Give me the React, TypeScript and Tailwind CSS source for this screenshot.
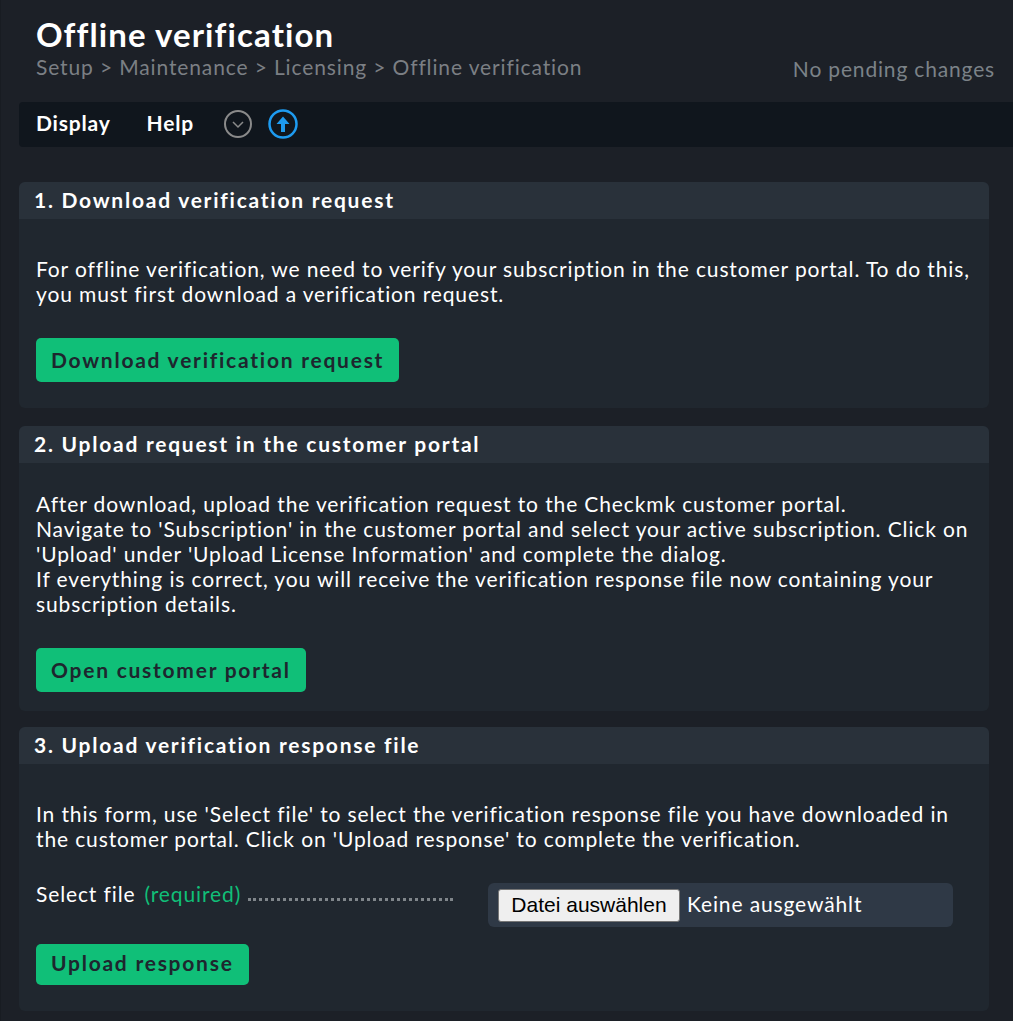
const btn = "inline-block rounded-[5px] bg-[#10bf78] px-[15px] text-[21px] font-bold tracking-[1.75px] text-[#1e262e]";
const bodyText = "px-[17px] text-[21px] leading-[25px] tracking-[0.875px]";

function Section({ title, className, children }: { title: string; className: string; children: React.ReactNode }) {
  return (
    <section className={`mr-6 rounded-[6px] bg-[#20272f] ${className}`}>
      <h2 className="h-[37px] rounded-t-[6px] bg-[#29313a] pl-[15px] text-[21px] leading-[36px] font-bold tracking-[1.75px] text-white">{title}</h2>
      {children}
    </section>
  );
}

export default function App() {
  return (
    <div className="h-[1021px] overflow-hidden border-l border-[#181c22] bg-[#1c2027] pl-[18px] font-['Lato',sans-serif] text-white">
      <header className="flex h-[102px] items-start justify-between">
        <div className="pl-[17px]">
          <h1 className="pt-[12px] text-[33px] leading-[44px] font-bold tracking-[1.1px]">Offline verification</h1>
          <div className="-mt-[3px] text-[21px] leading-[28px] tracking-[0.87px] text-[#7b7f84]">Setup &gt; Maintenance &gt; Licensing &gt; Offline verification</div>
        </div>
        <div className="pt-[55px] pr-[18px] text-[21px] leading-[28px] tracking-[0.83px] text-[#7b8288]">No pending changes</div>
      </header>
      <nav className="flex h-[45px] items-center rounded-l-[4px] bg-[#10161d] pl-[17px] text-[21px] font-bold">
        <span className="pb-[3px] tracking-[0.8px]">Display</span>
        <span className="ml-9 pb-[3px] tracking-[0.8px]">Help</span>
        <svg className="-mt-[1px] ml-[29px]" width="30" height="30" viewBox="0 0 30 30" fill="none">
          <circle cx="15" cy="15" r="13" stroke="#8a8a8a" strokeWidth="2" />
          <path d="M10 13l5 5 5-5" stroke="#8a8a8a" strokeWidth="1.5" />
        </svg>
        <svg className="-mt-[1px] ml-[15px]" width="30" height="30" viewBox="0 0 30 30" fill="none">
          <circle cx="15" cy="15" r="13.500" stroke="#1e9bf0" strokeWidth="2.500" />
          <path d="M15 7.500l6.500 7.500H17v8h-4v-8H8.500z" fill="#1e9bf0" />
        </svg>
      </nav>

      <Section title="1. Download verification request" className="mt-[35px] h-[226px]">
        <p className={`${bodyText} pt-[37px]`}>
          For offline verification, we need to verify your subscription in the customer portal. To do this, you must first download a verification request.
        </p>
        <button className={`${btn} mt-[32px] ml-[17px] h-[44px]`}>Download verification request</button>
      </Section>

      <Section title="2. Upload request in the customer portal" className="mt-[18px] h-[285px]">
        <p className={`${bodyText} pt-[28px]`}>
          After download, upload the verification request to the Checkmk customer portal.<br />
          Navigate to 'Subscription' in the customer portal and select your active subscription. Click on 'Upload' under 'Upload License Information' and complete the dialog.<br />
          If everything is correct, you will receive the verification response file now containing your subscription details.
        </p>
        <button className={`${btn} mt-[32px] ml-[17px] h-[44px]`}>Open customer portal</button>
      </Section>

      <Section title="3. Upload verification response file" className="mt-[16px] h-[284px]">
        <p className={`${bodyText} pt-[37px]`}>
          In this form, use 'Select file' to select the verification response file you have downloaded in the customer portal. Click on 'Upload response' to complete the verification.
        </p>
        <div className="mt-[32px] flex items-start pl-[17px]">
          <div className="-mt-[2px] flex w-[417px] overflow-hidden text-[21px] leading-[25px] tracking-[0.875px] whitespace-nowrap">
            <span>Select file</span>
            <span className="ml-[9px] text-[#10bf78]">(required)</span>
            <span className="mt-[17px] ml-[7px] h-[3px] flex-1 border-b-[3px] border-dotted border-[#80868b]" />
          </div>
          <div className="ml-[35px] flex h-[44px] w-[465px] items-center rounded-[6px] bg-[#2f3946] pl-[10px]">
            <span className="flex h-[33px] w-[182px] items-center justify-center rounded-[3px] border border-[#767676] bg-[#efefef] font-['Liberation_Sans',sans-serif] text-[21px] text-black">Datei auswählen</span>
            <span className="ml-[7px] pb-[2px] text-[21px] tracking-[0.875px]">Keine ausgewählt</span>
          </div>
        </div>
        <button className={`${btn} mt-[17px] ml-[17px] h-[41px] pb-[3px]`}>Upload response</button>
      </Section>
    </div>
  );
}
